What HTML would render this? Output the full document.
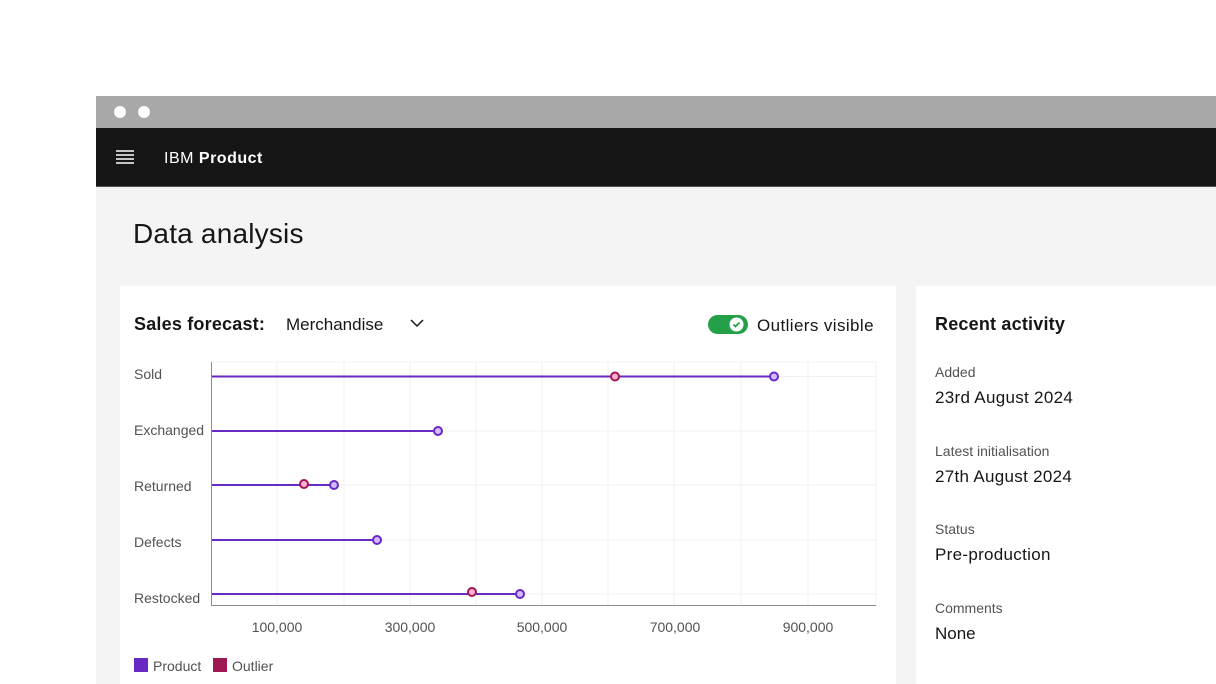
<!DOCTYPE html><html><head><style>
body{margin:0;width:1216px;height:684px;background:#fff;position:relative;overflow:hidden;font-family:"Liberation Sans",sans-serif;color:#161616}
.a{position:absolute}
</style></head><body>
<div class="a" style="left:96px;top:96px;width:1120px;height:32px;background:#a8a8a8"></div>
<div class="a" style="left:114px;top:106px;width:12px;height:12px;border-radius:50%;background:#fff"></div>
<div class="a" style="left:138px;top:106px;width:12px;height:12px;border-radius:50%;background:#fff"></div>
<div class="a" style="left:96px;top:128px;width:1120px;height:58px;background:#161616;border-bottom:1px solid #525252"></div>
<svg class="a" style="left:116px;top:150px" width="18" height="16"><g stroke="#fff" stroke-width="1.5"><path d="M0 1h18M0 5h18M0 9h18M0 13h18"/></g></svg>
<div class="a" style="left:164px;top:150px;color:#fff;font-size:16px;letter-spacing:0.5px">IBM <b>Product</b></div>
<div class="a" style="left:96px;top:187px;width:1120px;height:497px;background:#f4f4f4"></div>
<div class="a" style="left:133px;top:218px;font-size:28px;letter-spacing:0.2px">Data analysis</div>
<div class="a" style="left:120px;top:286px;width:776px;height:398px;background:#fff"></div>
<div class="a" style="left:916px;top:286px;width:300px;height:398px;background:#fff"></div>
<div class="a" style="left:134px;top:314px;font-size:18px;font-weight:bold;letter-spacing:0.2px">Sales forecast:</div>
<div class="a" style="left:286px;top:315px;font-size:17px">Merchandise</div>
<svg class="a" style="left:410px;top:318px" width="14" height="10"><path d="M1 2l6 6 6-6" stroke="#161616" stroke-width="1.5" fill="none"/></svg>
<div class="a" style="left:708px;top:315px;width:40px;height:19px;border-radius:10px;background:#24a148"></div>
<svg class="a" style="left:729px;top:317px" width="15" height="15"><circle cx="7.5" cy="7.5" r="7" fill="#fff"/><path d="M4.5 7.5l2 2 4-4" stroke="#24a148" stroke-width="1.8" fill="none"/></svg>
<div class="a" style="left:757px;top:316px;font-size:17px;letter-spacing:0.4px">Outliers visible</div>
<svg class="a" style="left:120px;top:350px" width="776" height="334" font-family="Liberation Sans" font-size="14" fill="#525252">
<g stroke="#f0f0f0" stroke-width="1">
<path d="M157 12V255M224 12V255M290 12V255M356 12V255M422 12V255M488 12V255M554 12V255M621 12V255M688 12V255M756 12V255"/>
<path d="M91 12H756M91 26.5H756M91 81H756M91 135H756M91 190H756M91 244H756"/>
</g>
<path d="M91.5 12V255.5H756" stroke="#8d8d8d" fill="none"/>
<text x="14" y="29">Sold</text><text x="14" y="85">Exchanged</text><text x="14" y="141">Returned</text><text x="14" y="197">Defects</text><text x="14" y="253">Restocked</text>
<g text-anchor="middle"><text x="157" y="282">100,000</text><text x="290" y="282">300,000</text><text x="422" y="282">500,000</text><text x="555" y="282">700,000</text><text x="688" y="282">900,000</text></g>
<g stroke="#6929c4" stroke-width="2"><path d="M92 26.5H654M92 81H318M92 135H214M92 190H257M92 244H400"/></g>
<g stroke-width="2"><g fill="#d4bbff" stroke="#6929c4"><circle cx="654" cy="26.5" r="4"/><circle cx="318" cy="81" r="4"/><circle cx="214" cy="135" r="4"/><circle cx="257" cy="190" r="4"/><circle cx="400" cy="244" r="4"/></g>
<g fill="#ffafd2" stroke="#9f1853"><circle cx="495" cy="26.5" r="4"/><circle cx="184" cy="134" r="4"/><circle cx="352" cy="242" r="4"/></g></g>
<rect x="14" y="308" width="14" height="14" fill="#6929c4"/><text x="33" y="321">Product</text>
<rect x="93" y="308" width="14" height="14" fill="#9f1853"/><text x="112" y="321">Outlier</text>
</svg>
<div class="a" style="left:935px;top:314px;font-size:18px;font-weight:bold;letter-spacing:0.2px">Recent activity</div>
<div class="a" style="left:935px;top:364px;font-size:14px;color:#525252">Added</div>
<div class="a" style="left:935px;top:388px;font-size:17px;letter-spacing:0.3px">23rd August 2024</div>
<div class="a" style="left:935px;top:443px;font-size:14px;color:#525252">Latest initialisation</div>
<div class="a" style="left:935px;top:467px;font-size:17px;letter-spacing:0.3px">27th August 2024</div>
<div class="a" style="left:935px;top:521px;font-size:14px;color:#525252">Status</div>
<div class="a" style="left:935px;top:545px;font-size:17px;letter-spacing:0.3px">Pre-production</div>
<div class="a" style="left:935px;top:600px;font-size:14px;color:#525252">Comments</div>
<div class="a" style="left:935px;top:624px;font-size:17px">None</div>
</body></html>
